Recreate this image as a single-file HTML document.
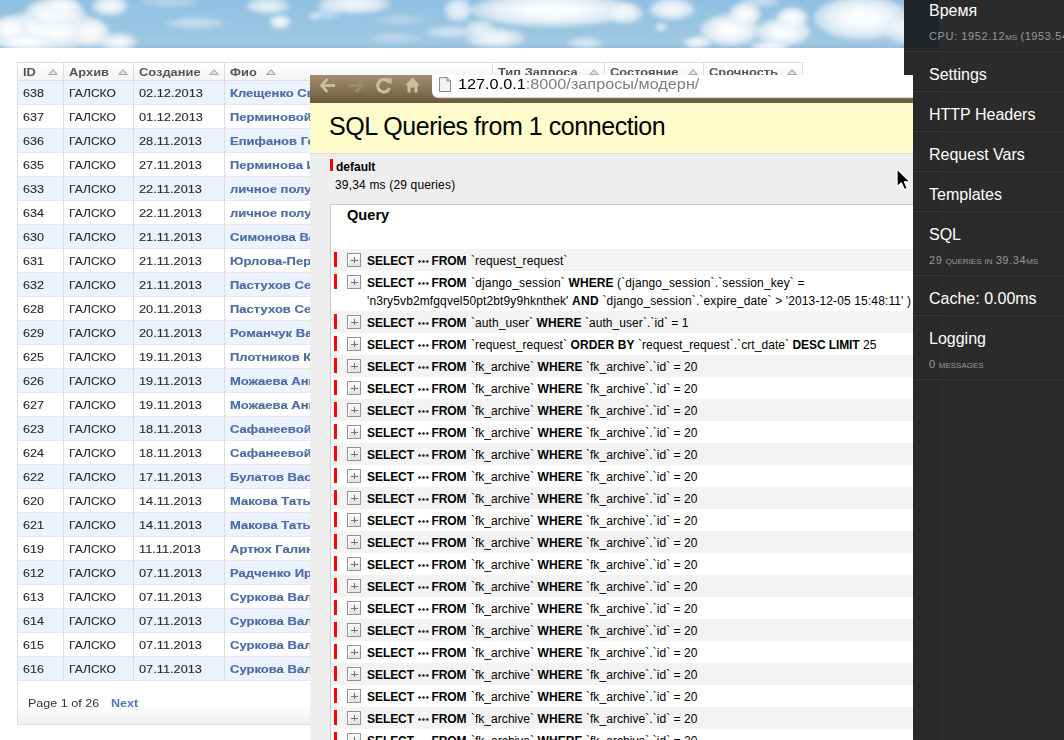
<!DOCTYPE html>
<html><head><meta charset="utf-8">
<style>
*{margin:0;padding:0;box-sizing:border-box}
html,body{width:1064px;height:740px;overflow:hidden;background:#fff;font-family:"Liberation Sans",sans-serif;position:relative}
.abs{position:absolute}
#sky{left:0;top:0;width:939px;height:48px;background:linear-gradient(#8fc0e3,#9fc8e2 90%,#94bedb);overflow:hidden}
#sky .c{position:absolute;border-radius:50%;background:radial-gradient(farthest-side,#fbfcfd 30%,rgba(236,242,246,.85) 75%,rgba(225,234,240,.5));filter:blur(2px)}
#lt{left:17px;top:62px;width:786px;height:620px}
#lt .hd{position:absolute;left:0;top:0;width:786px;height:19px;border-top:1px solid #ddd;border-bottom:1px solid #ddd;background:linear-gradient(#fff,#f3f3f3)}
#lt .rw{position:absolute;left:0;width:786px;height:24px;border-bottom:1px solid #e8e8e8}
#lt .rw.o{background:#edf3fe}
#lt .vl{position:absolute;top:0;width:1px;height:619px;background:#ddd;z-index:2}
.ht{position:absolute;top:66px;font-size:11px;line-height:12px;font-weight:bold;color:#555;white-space:nowrap;transform:scaleX(1.17);transform-origin:0 0}
.tri{position:absolute;top:69px;z-index:3}
.tc{position:absolute;font-size:11px;line-height:24px;height:24px;color:#2a2a2a;-webkit-text-stroke:.1px #2a2a2a;white-space:nowrap;transform:scaleX(1.144);transform-origin:0 0}
.tc.ga{transform:scaleX(1.095)}
.tc.dt{transform:scaleX(1.16)}
.tc.nm{color:#4c70ad;font-weight:bold;transform:scaleX(1.185)}
#pg{left:17px;top:681px;width:786px;height:44px;border:1px solid #ddd;border-top:none;background:linear-gradient(#fff 55%,#eee);font-size:11px;color:#333}
#pg span{position:absolute;left:10px;top:16px;transform:scaleX(1.14);transform-origin:0 0}
#pg b{position:absolute;left:93px;top:16px;color:#4f76b6;transform:scaleX(1.14);transform-origin:0 0}
#ov{z-index:10;left:310px;top:75px;width:603px;height:665px;background:#eee;overflow:hidden}
#bar{left:0;top:0;width:603px;height:28px;background:linear-gradient(#a38f70,#6b5940)}
#url{left:122px;top:0;width:481px;height:22px;background:#fff;border-bottom-left-radius:6px;box-shadow:0 1px 0 #ddd6cc,0 2px 0 #7d6c55;font-size:14px;color:#808080;white-space:nowrap}
#url span{position:absolute;left:26px;top:1px;transform:scaleX(1.16);transform-origin:0 0}
#url b{font-weight:normal;color:#000}
#yel{left:0;top:28px;width:603px;height:51px;background:#fffccc;border-bottom:1px solid #ddd}
#yel h1{position:absolute;left:19px;top:9px;font-size:25px;letter-spacing:-.45px;line-height:28px;font-weight:normal;color:#000;white-space:nowrap}
#def{left:20px;top:84px;width:3px;height:12px;background:#f00}
#deft{left:26px;top:85px;font-size:12px;line-height:14px;font-weight:bold;color:#000}
#ms{left:25px;top:103px;font-size:12px;line-height:14px;color:#000;letter-spacing:.17px}
#qt{left:20px;top:129px;width:620px;height:560px;background:#fff;border:1px solid #ccc}
#qh{left:16px;top:2px;font-size:14.6px;line-height:16px;font-weight:bold;color:#000}
#qrows{left:21px;top:0;width:582px;height:665px}
.r{position:absolute;left:0;width:582px;height:22px;font-size:12px;color:#000;white-space:nowrap}
.r.g{background:#f3f3f3}
.r i{position:absolute;left:3px;top:3px;width:3px;height:15px;background:#f00}
.r u{position:absolute;left:16px;top:4px;width:14px;height:14px;border:1px solid #939393;background:linear-gradient(#fcfcfc,#e2e2e2);box-shadow:inset 1px 1px 0 rgba(255,255,255,.8);text-decoration:none}
.r u:before{content:"";position:absolute;left:3px;top:6px;width:7px;height:1px;background:#6f6f6f}
.r u:after{content:"";position:absolute;left:6px;top:3px;width:1px;height:6px;background:#6f6f6f}
.r p{position:absolute;left:36px;top:3px;line-height:18px}
.r em{display:inline-block;width:11px;height:3px;margin-left:1px;margin-right:-0.5px;background-image:radial-gradient(circle at 1.5px 1.5px,#222 0.9px,rgba(0,0,0,0) 1.6px);background-size:3.9px 3px;background-repeat:repeat-x;vertical-align:2px}
#sb{z-index:20;left:913px;top:0;width:151px;height:740px;background:#2b2b2b}
#sbt{z-index:20;left:904px;top:0;width:9px;height:75px;background:#292929}
#sbd{z-index:21;left:904px;top:0;width:35px;height:48px;background:#202427}
#sbx{z-index:22;left:913px;top:0;width:151px;height:740px}
.si{position:absolute;left:16px;color:#fff;font-size:16px;line-height:16px;white-space:nowrap}
.ss{position:absolute;left:16px;color:#999;font-size:11px;line-height:12px;white-space:nowrap}
.ss small{font-variant:small-caps;font-size:11px}
.sep{position:absolute;left:0;width:151px;height:2px;border-top:1px solid #222;background:#383838}
.ss s{text-decoration:none;letter-spacing:.6px}

#sbs{z-index:20;left:913px;top:48px;width:27px;height:692px;background:#292929}

.r em+span+b{margin-right:1px}

</style></head><body>
<div id="sky" class="abs"><div class="c" style="left:-5px;top:10px;width:110px;height:40px;opacity:1.00"></div><div class="c" style="left:25px;top:-2px;width:60px;height:28px;opacity:1.00"></div><div class="c" style="left:-8px;top:16px;width:36px;height:28px;opacity:1.00"></div><div class="c" style="left:74px;top:19px;width:36px;height:28px;opacity:0.90"></div><div class="c" style="left:44px;top:-2px;width:36px;height:16px;opacity:0.90"></div><div class="c" style="left:-5px;top:34px;width:60px;height:16px;opacity:1.00"></div><div class="c" style="left:92px;top:-4px;width:36px;height:20px;opacity:0.90"></div><div class="c" style="left:99px;top:33px;width:38px;height:18px;opacity:0.90"></div><div class="c" style="left:165px;top:17px;width:60px;height:12px;opacity:0.45"></div><div class="c" style="left:140px;top:-3px;width:60px;height:10px;opacity:0.35"></div><div class="c" style="left:246px;top:-2px;width:44px;height:16px;opacity:0.80"></div><div class="c" style="left:269px;top:15px;width:22px;height:14px;opacity:0.90"></div><div class="c" style="left:308px;top:12px;width:14px;height:8px;opacity:0.60"></div><div class="c" style="left:316px;top:2px;width:24px;height:18px;opacity:0.40"></div><div class="c" style="left:319px;top:-6px;width:72px;height:20px;opacity:0.85"></div><div class="c" style="left:375px;top:15px;width:50px;height:10px;opacity:0.30"></div><div class="c" style="left:370px;top:33px;width:50px;height:10px;opacity:0.35"></div><div class="c" style="left:444px;top:-2px;width:28px;height:24px;opacity:0.80"></div><div class="c" style="left:425px;top:26px;width:50px;height:12px;opacity:0.55"></div><div class="c" style="left:470px;top:-7px;width:164px;height:34px;opacity:1.00"></div><div class="c" style="left:607px;top:2px;width:36px;height:22px;opacity:0.85"></div><div class="c" style="left:465px;top:28px;width:60px;height:20px;opacity:0.85"></div><div class="c" style="left:465px;top:20px;width:30px;height:16px;opacity:0.70"></div><div class="c" style="left:567px;top:37px;width:36px;height:12px;opacity:0.60"></div><div class="c" style="left:649px;top:-2px;width:46px;height:22px;opacity:0.90"></div><div class="c" style="left:655px;top:23px;width:12px;height:8px;opacity:0.80"></div><div class="c" style="left:683px;top:38px;width:20px;height:10px;opacity:0.70"></div><div class="c" style="left:700px;top:14px;width:60px;height:32px;opacity:1.00"></div><div class="c" style="left:729px;top:2px;width:32px;height:24px;opacity:1.00"></div><div class="c" style="left:755px;top:18px;width:56px;height:28px;opacity:1.00"></div><div class="c" style="left:776px;top:7px;width:32px;height:22px;opacity:1.00"></div><div class="c" style="left:750px;top:41px;width:40px;height:10px;opacity:0.90"></div><div class="c" style="left:814px;top:-4px;width:96px;height:44px;opacity:1.00"></div><div class="c" style="left:885px;top:16px;width:40px;height:28px;opacity:0.80"></div><div class="c" style="left:688px;top:36px;width:24px;height:12px;opacity:0.80"></div><div class="c" style="left:740px;top:-3px;width:40px;height:10px;opacity:0.50"></div></div>
<div id="lt" class="abs"><div class="hd"></div><div class="vl" style="left:0px"></div><div class="vl" style="left:46px"></div><div class="vl" style="left:116px"></div><div class="vl" style="left:207px"></div><div class="vl" style="left:475px"></div><div class="vl" style="left:587px"></div><div class="vl" style="left:686px"></div><div class="vl" style="left:785px"></div><div class="rw o" style="top:19px"></div><div class="rw" style="top:43px"></div><div class="rw o" style="top:67px"></div><div class="rw" style="top:91px"></div><div class="rw o" style="top:115px"></div><div class="rw" style="top:139px"></div><div class="rw o" style="top:163px"></div><div class="rw" style="top:187px"></div><div class="rw o" style="top:211px"></div><div class="rw" style="top:235px"></div><div class="rw o" style="top:259px"></div><div class="rw" style="top:283px"></div><div class="rw o" style="top:307px"></div><div class="rw" style="top:331px"></div><div class="rw o" style="top:355px"></div><div class="rw" style="top:379px"></div><div class="rw o" style="top:403px"></div><div class="rw" style="top:427px"></div><div class="rw o" style="top:451px"></div><div class="rw" style="top:475px"></div><div class="rw o" style="top:499px"></div><div class="rw" style="top:523px"></div><div class="rw o" style="top:547px"></div><div class="rw" style="top:571px"></div><div class="rw o" style="top:595px"></div></div><div class="ht" style="left:23px">ID</div><div class="ht" style="left:69px">Архив</div><div class="ht" style="left:139px">Создание</div><div class="ht" style="left:230px">Фио</div><div class="ht" style="left:498px">Тип Запроса</div><div class="ht" style="left:610px">Состояние</div><div class="ht" style="left:709px">Срочность</div><svg class="tri" style="left:48px" width="11" height="7"><path d="M0.7 5.5L5 0.8L9.3 5.5Z" fill="#e6e6e6" stroke="#a8a8a8" stroke-width="1.1" stroke-linejoin="round"/></svg><svg class="tri" style="left:118px" width="11" height="7"><path d="M0.7 5.5L5 0.8L9.3 5.5Z" fill="#e6e6e6" stroke="#a8a8a8" stroke-width="1.1" stroke-linejoin="round"/></svg><svg class="tri" style="left:209px" width="11" height="7"><path d="M0.7 5.5L5 0.8L9.3 5.5Z" fill="#e6e6e6" stroke="#a8a8a8" stroke-width="1.1" stroke-linejoin="round"/></svg><svg class="tri" style="left:266px" width="11" height="7"><path d="M0.7 5.5L5 0.8L9.3 5.5Z" fill="#e6e6e6" stroke="#a8a8a8" stroke-width="1.1" stroke-linejoin="round"/></svg><svg class="tri" style="left:589px" width="11" height="7"><path d="M0.7 5.5L5 0.8L9.3 5.5Z" fill="#e6e6e6" stroke="#a8a8a8" stroke-width="1.1" stroke-linejoin="round"/></svg><svg class="tri" style="left:688px" width="11" height="7"><path d="M0.7 5.5L5 0.8L9.3 5.5Z" fill="#e6e6e6" stroke="#a8a8a8" stroke-width="1.1" stroke-linejoin="round"/></svg><svg class="tri" style="left:787px" width="11" height="7"><path d="M0.7 5.5L5 0.8L9.3 5.5Z" fill="#e6e6e6" stroke="#a8a8a8" stroke-width="1.1" stroke-linejoin="round"/></svg><div class="tc" style="left:23px;top:81px">638</div><div class="tc ga" style="left:69px;top:81px">ГАЛСКО</div><div class="tc dt" style="left:139px;top:81px">02.12.2013</div><div class="tc nm" style="left:230px;top:81px">Клещенко Светлана</div><div class="tc" style="left:23px;top:105px">637</div><div class="tc ga" style="left:69px;top:105px">ГАЛСКО</div><div class="tc dt" style="left:139px;top:105px">01.12.2013</div><div class="tc nm" style="left:230px;top:105px">Перминовой Ирины</div><div class="tc" style="left:23px;top:129px">636</div><div class="tc ga" style="left:69px;top:129px">ГАЛСКО</div><div class="tc dt" style="left:139px;top:129px">28.11.2013</div><div class="tc nm" style="left:230px;top:129px">Епифанов Геннадий</div><div class="tc" style="left:23px;top:153px">635</div><div class="tc ga" style="left:69px;top:153px">ГАЛСКО</div><div class="tc dt" style="left:139px;top:153px">27.11.2013</div><div class="tc nm" style="left:230px;top:153px">Перминова Ирина</div><div class="tc" style="left:23px;top:177px">633</div><div class="tc ga" style="left:69px;top:177px">ГАЛСКО</div><div class="tc dt" style="left:139px;top:177px">22.11.2013</div><div class="tc nm" style="left:230px;top:177px">личное получение</div><div class="tc" style="left:23px;top:201px">634</div><div class="tc ga" style="left:69px;top:201px">ГАЛСКО</div><div class="tc dt" style="left:139px;top:201px">22.11.2013</div><div class="tc nm" style="left:230px;top:201px">личное получение</div><div class="tc" style="left:23px;top:225px">630</div><div class="tc ga" style="left:69px;top:225px">ГАЛСКО</div><div class="tc dt" style="left:139px;top:225px">21.11.2013</div><div class="tc nm" style="left:230px;top:225px">Симонова Валентина</div><div class="tc" style="left:23px;top:249px">631</div><div class="tc ga" style="left:69px;top:249px">ГАЛСКО</div><div class="tc dt" style="left:139px;top:249px">21.11.2013</div><div class="tc nm" style="left:230px;top:249px">Юрлова-Перминова</div><div class="tc" style="left:23px;top:273px">632</div><div class="tc ga" style="left:69px;top:273px">ГАЛСКО</div><div class="tc dt" style="left:139px;top:273px">21.11.2013</div><div class="tc nm" style="left:230px;top:273px">Пастухов Сергей</div><div class="tc" style="left:23px;top:297px">628</div><div class="tc ga" style="left:69px;top:297px">ГАЛСКО</div><div class="tc dt" style="left:139px;top:297px">20.11.2013</div><div class="tc nm" style="left:230px;top:297px">Пастухов Сергей</div><div class="tc" style="left:23px;top:321px">629</div><div class="tc ga" style="left:69px;top:321px">ГАЛСКО</div><div class="tc dt" style="left:139px;top:321px">20.11.2013</div><div class="tc nm" style="left:230px;top:321px">Романчук Валентина</div><div class="tc" style="left:23px;top:345px">625</div><div class="tc ga" style="left:69px;top:345px">ГАЛСКО</div><div class="tc dt" style="left:139px;top:345px">19.11.2013</div><div class="tc nm" style="left:230px;top:345px">Плотников Константин</div><div class="tc" style="left:23px;top:369px">626</div><div class="tc ga" style="left:69px;top:369px">ГАЛСКО</div><div class="tc dt" style="left:139px;top:369px">19.11.2013</div><div class="tc nm" style="left:230px;top:369px">Можаева Анна</div><div class="tc" style="left:23px;top:393px">627</div><div class="tc ga" style="left:69px;top:393px">ГАЛСКО</div><div class="tc dt" style="left:139px;top:393px">19.11.2013</div><div class="tc nm" style="left:230px;top:393px">Можаева Анна</div><div class="tc" style="left:23px;top:417px">623</div><div class="tc ga" style="left:69px;top:417px">ГАЛСКО</div><div class="tc dt" style="left:139px;top:417px">18.11.2013</div><div class="tc nm" style="left:230px;top:417px">Сафанеевой Ольги</div><div class="tc" style="left:23px;top:441px">624</div><div class="tc ga" style="left:69px;top:441px">ГАЛСКО</div><div class="tc dt" style="left:139px;top:441px">18.11.2013</div><div class="tc nm" style="left:230px;top:441px">Сафанеевой Ольги</div><div class="tc" style="left:23px;top:465px">622</div><div class="tc ga" style="left:69px;top:465px">ГАЛСКО</div><div class="tc dt" style="left:139px;top:465px">17.11.2013</div><div class="tc nm" style="left:230px;top:465px">Булатов Василий</div><div class="tc" style="left:23px;top:489px">620</div><div class="tc ga" style="left:69px;top:489px">ГАЛСКО</div><div class="tc dt" style="left:139px;top:489px">14.11.2013</div><div class="tc nm" style="left:230px;top:489px">Макова Татьяна</div><div class="tc" style="left:23px;top:513px">621</div><div class="tc ga" style="left:69px;top:513px">ГАЛСКО</div><div class="tc dt" style="left:139px;top:513px">14.11.2013</div><div class="tc nm" style="left:230px;top:513px">Макова Татьяна</div><div class="tc" style="left:23px;top:537px">619</div><div class="tc ga" style="left:69px;top:537px">ГАЛСКО</div><div class="tc dt" style="left:139px;top:537px">11.11.2013</div><div class="tc nm" style="left:230px;top:537px">Артюх Галина</div><div class="tc" style="left:23px;top:561px">612</div><div class="tc ga" style="left:69px;top:561px">ГАЛСКО</div><div class="tc dt" style="left:139px;top:561px">07.11.2013</div><div class="tc nm" style="left:230px;top:561px">Радченко Ирина</div><div class="tc" style="left:23px;top:585px">613</div><div class="tc ga" style="left:69px;top:585px">ГАЛСКО</div><div class="tc dt" style="left:139px;top:585px">07.11.2013</div><div class="tc nm" style="left:230px;top:585px">Суркова Валентина</div><div class="tc" style="left:23px;top:609px">614</div><div class="tc ga" style="left:69px;top:609px">ГАЛСКО</div><div class="tc dt" style="left:139px;top:609px">07.11.2013</div><div class="tc nm" style="left:230px;top:609px">Суркова Валентина</div><div class="tc" style="left:23px;top:633px">615</div><div class="tc ga" style="left:69px;top:633px">ГАЛСКО</div><div class="tc dt" style="left:139px;top:633px">07.11.2013</div><div class="tc nm" style="left:230px;top:633px">Суркова Валентина</div><div class="tc" style="left:23px;top:657px">616</div><div class="tc ga" style="left:69px;top:657px">ГАЛСКО</div><div class="tc dt" style="left:139px;top:657px">07.11.2013</div><div class="tc nm" style="left:230px;top:657px">Суркова Валентина</div><div id="pg" class="abs"><span>Page 1 of 26</span><b>Next</b></div>
<div id="ov" class="abs">
  <div id="bar" class="abs"></div>
  <svg class="abs" style="left:0;top:0" width="122" height="28" viewBox="310 75 122 28">
    <g fill="none" stroke="#c9c19e" stroke-width="2.8" stroke-linecap="butt" stroke-linejoin="round">
      <path d="M327.5 79L321.5 85.5L327.5 92"/>
      <path d="M321.5 85.5H335"/>
    </g>
    <g fill="none" stroke="#9a8b6c" stroke-width="3">
      <path d="M356 79L362 85.5L356 92"/>
      <path d="M348.5 85.5H360.5"/>
    </g>
    <path d="M389.2 82.5A6.2 6.2 0 1 0 389.6 88.2" fill="none" stroke="#c9c19e" stroke-width="3"/>
    <path d="M385.5 78.5L391.5 78.5L391.5 84.5Z" fill="#c9c19e"/>
    <path d="M405 85.5L412.5 77.5L420 85.5L417.5 85.5L417.5 92.5L414.5 92.5L414.5 87.5L410.5 87.5L410.5 92.5L407.5 92.5L407.5 85.5Z" fill="#c9c19e"/>
    
  </svg>
  <div id="url" class="abs"><svg class="abs" style="left:7px;top:2px" width="13" height="15"><path d="M0.5 0.5H8L11.5 4V14.5H0.5Z" fill="#f2f2f2" stroke="#8a8a8a"/><path d="M8 0.5V4H11.5" fill="none" stroke="#8a8a8a"/></svg><span><b>127.0.0.1</b>:8000/запросы/модерн/</span></div>
  <div id="yel" class="abs"><h1>SQL Queries from 1 connection</h1></div>
  <div id="def" class="abs"></div>
  <div id="deft" class="abs">default</div>
  <div id="ms" class="abs">39,34 ms (29 queries)</div>
  <div id="qt" class="abs"><div id="qh" class="abs">Query</div></div>
<div id="qrows" class="abs"><div class="r g" style="top:174px;height:22px"><i></i><u></u><p><b style="letter-spacing:-0.056px">SELECT</b><span style="letter-spacing:-0.334px"> </span><em></em><span style="letter-spacing:-0.334px"> </span><b style="letter-spacing:-0.082px">FROM</b><span style="letter-spacing:0.108px"> `request_request`</span></p></div><div class="r " style="top:196px;height:40px"><i></i><u></u><p><b style="letter-spacing:-0.056px">SELECT</b><span style="letter-spacing:-0.334px"> </span><em></em><span style="letter-spacing:-0.334px"> </span><b style="letter-spacing:-0.082px">FROM</b><span style="letter-spacing:0.164px"> `django_session` </span><b style="letter-spacing:0.067px">WHERE</b><span style="letter-spacing:0.135px"> (`django_session`.`session_key` =</span><br><span style="letter-spacing:0.122px">'n3ry5vb2mfgqvel50pt2bt9y9hknthek' </span><b style="letter-spacing:0.334px">AND</b><span style="letter-spacing:0.127px"> `django_session`.`expire_date` &gt; '2013-12-05 15:48:11' )</span></p></div><div class="r g" style="top:236px;height:22px"><i></i><u></u><p><b style="letter-spacing:-0.056px">SELECT</b><span style="letter-spacing:-0.334px"> </span><em></em><span style="letter-spacing:-0.334px"> </span><b style="letter-spacing:-0.082px">FROM</b><span style="letter-spacing:0.074px"> `auth_user` </span><b style="letter-spacing:0.067px">WHERE</b><span style="letter-spacing:0.061px"> `auth_user`.`id` = 1</span></p></div><div class="r " style="top:258px;height:22px"><i></i><u></u><p><b style="letter-spacing:-0.056px">SELECT</b><span style="letter-spacing:-0.334px"> </span><em></em><span style="letter-spacing:-0.334px"> </span><b style="letter-spacing:-0.082px">FROM</b><span style="letter-spacing:0.085px"> `request_request` </span><b style="letter-spacing:0.083px">ORDER BY</b><span style="letter-spacing:0.064px"> `request_request`.`crt_date` </span><b style="letter-spacing:-0.100px">DESC LIMIT</b><span style="letter-spacing:0.106px"> 25</span></p></div><div class="r g" style="top:280px;height:22px"><i></i><u></u><p><b style="letter-spacing:-0.056px">SELECT</b><span style="letter-spacing:-0.334px"> </span><em></em><span style="letter-spacing:-0.334px"> </span><b style="letter-spacing:-0.082px">FROM</b><span style="letter-spacing:0.046px"> `fk_archive` </span><b style="letter-spacing:0.067px">WHERE</b><span style="letter-spacing:0.056px"> `fk_archive`.`id` = 20</span></p></div><div class="r " style="top:302px;height:22px"><i></i><u></u><p><b style="letter-spacing:-0.056px">SELECT</b><span style="letter-spacing:-0.334px"> </span><em></em><span style="letter-spacing:-0.334px"> </span><b style="letter-spacing:-0.082px">FROM</b><span style="letter-spacing:0.046px"> `fk_archive` </span><b style="letter-spacing:0.067px">WHERE</b><span style="letter-spacing:0.056px"> `fk_archive`.`id` = 20</span></p></div><div class="r g" style="top:324px;height:22px"><i></i><u></u><p><b style="letter-spacing:-0.056px">SELECT</b><span style="letter-spacing:-0.334px"> </span><em></em><span style="letter-spacing:-0.334px"> </span><b style="letter-spacing:-0.082px">FROM</b><span style="letter-spacing:0.046px"> `fk_archive` </span><b style="letter-spacing:0.067px">WHERE</b><span style="letter-spacing:0.056px"> `fk_archive`.`id` = 20</span></p></div><div class="r " style="top:346px;height:22px"><i></i><u></u><p><b style="letter-spacing:-0.056px">SELECT</b><span style="letter-spacing:-0.334px"> </span><em></em><span style="letter-spacing:-0.334px"> </span><b style="letter-spacing:-0.082px">FROM</b><span style="letter-spacing:0.046px"> `fk_archive` </span><b style="letter-spacing:0.067px">WHERE</b><span style="letter-spacing:0.056px"> `fk_archive`.`id` = 20</span></p></div><div class="r g" style="top:368px;height:22px"><i></i><u></u><p><b style="letter-spacing:-0.056px">SELECT</b><span style="letter-spacing:-0.334px"> </span><em></em><span style="letter-spacing:-0.334px"> </span><b style="letter-spacing:-0.082px">FROM</b><span style="letter-spacing:0.046px"> `fk_archive` </span><b style="letter-spacing:0.067px">WHERE</b><span style="letter-spacing:0.056px"> `fk_archive`.`id` = 20</span></p></div><div class="r " style="top:390px;height:22px"><i></i><u></u><p><b style="letter-spacing:-0.056px">SELECT</b><span style="letter-spacing:-0.334px"> </span><em></em><span style="letter-spacing:-0.334px"> </span><b style="letter-spacing:-0.082px">FROM</b><span style="letter-spacing:0.046px"> `fk_archive` </span><b style="letter-spacing:0.067px">WHERE</b><span style="letter-spacing:0.056px"> `fk_archive`.`id` = 20</span></p></div><div class="r g" style="top:412px;height:22px"><i></i><u></u><p><b style="letter-spacing:-0.056px">SELECT</b><span style="letter-spacing:-0.334px"> </span><em></em><span style="letter-spacing:-0.334px"> </span><b style="letter-spacing:-0.082px">FROM</b><span style="letter-spacing:0.046px"> `fk_archive` </span><b style="letter-spacing:0.067px">WHERE</b><span style="letter-spacing:0.056px"> `fk_archive`.`id` = 20</span></p></div><div class="r " style="top:434px;height:22px"><i></i><u></u><p><b style="letter-spacing:-0.056px">SELECT</b><span style="letter-spacing:-0.334px"> </span><em></em><span style="letter-spacing:-0.334px"> </span><b style="letter-spacing:-0.082px">FROM</b><span style="letter-spacing:0.046px"> `fk_archive` </span><b style="letter-spacing:0.067px">WHERE</b><span style="letter-spacing:0.056px"> `fk_archive`.`id` = 20</span></p></div><div class="r g" style="top:456px;height:22px"><i></i><u></u><p><b style="letter-spacing:-0.056px">SELECT</b><span style="letter-spacing:-0.334px"> </span><em></em><span style="letter-spacing:-0.334px"> </span><b style="letter-spacing:-0.082px">FROM</b><span style="letter-spacing:0.046px"> `fk_archive` </span><b style="letter-spacing:0.067px">WHERE</b><span style="letter-spacing:0.056px"> `fk_archive`.`id` = 20</span></p></div><div class="r " style="top:478px;height:22px"><i></i><u></u><p><b style="letter-spacing:-0.056px">SELECT</b><span style="letter-spacing:-0.334px"> </span><em></em><span style="letter-spacing:-0.334px"> </span><b style="letter-spacing:-0.082px">FROM</b><span style="letter-spacing:0.046px"> `fk_archive` </span><b style="letter-spacing:0.067px">WHERE</b><span style="letter-spacing:0.056px"> `fk_archive`.`id` = 20</span></p></div><div class="r g" style="top:500px;height:22px"><i></i><u></u><p><b style="letter-spacing:-0.056px">SELECT</b><span style="letter-spacing:-0.334px"> </span><em></em><span style="letter-spacing:-0.334px"> </span><b style="letter-spacing:-0.082px">FROM</b><span style="letter-spacing:0.046px"> `fk_archive` </span><b style="letter-spacing:0.067px">WHERE</b><span style="letter-spacing:0.056px"> `fk_archive`.`id` = 20</span></p></div><div class="r " style="top:522px;height:22px"><i></i><u></u><p><b style="letter-spacing:-0.056px">SELECT</b><span style="letter-spacing:-0.334px"> </span><em></em><span style="letter-spacing:-0.334px"> </span><b style="letter-spacing:-0.082px">FROM</b><span style="letter-spacing:0.046px"> `fk_archive` </span><b style="letter-spacing:0.067px">WHERE</b><span style="letter-spacing:0.056px"> `fk_archive`.`id` = 20</span></p></div><div class="r g" style="top:544px;height:22px"><i></i><u></u><p><b style="letter-spacing:-0.056px">SELECT</b><span style="letter-spacing:-0.334px"> </span><em></em><span style="letter-spacing:-0.334px"> </span><b style="letter-spacing:-0.082px">FROM</b><span style="letter-spacing:0.046px"> `fk_archive` </span><b style="letter-spacing:0.067px">WHERE</b><span style="letter-spacing:0.056px"> `fk_archive`.`id` = 20</span></p></div><div class="r " style="top:566px;height:22px"><i></i><u></u><p><b style="letter-spacing:-0.056px">SELECT</b><span style="letter-spacing:-0.334px"> </span><em></em><span style="letter-spacing:-0.334px"> </span><b style="letter-spacing:-0.082px">FROM</b><span style="letter-spacing:0.046px"> `fk_archive` </span><b style="letter-spacing:0.067px">WHERE</b><span style="letter-spacing:0.056px"> `fk_archive`.`id` = 20</span></p></div><div class="r g" style="top:588px;height:22px"><i></i><u></u><p><b style="letter-spacing:-0.056px">SELECT</b><span style="letter-spacing:-0.334px"> </span><em></em><span style="letter-spacing:-0.334px"> </span><b style="letter-spacing:-0.082px">FROM</b><span style="letter-spacing:0.046px"> `fk_archive` </span><b style="letter-spacing:0.067px">WHERE</b><span style="letter-spacing:0.056px"> `fk_archive`.`id` = 20</span></p></div><div class="r " style="top:610px;height:22px"><i></i><u></u><p><b style="letter-spacing:-0.056px">SELECT</b><span style="letter-spacing:-0.334px"> </span><em></em><span style="letter-spacing:-0.334px"> </span><b style="letter-spacing:-0.082px">FROM</b><span style="letter-spacing:0.046px"> `fk_archive` </span><b style="letter-spacing:0.067px">WHERE</b><span style="letter-spacing:0.056px"> `fk_archive`.`id` = 20</span></p></div><div class="r g" style="top:632px;height:22px"><i></i><u></u><p><b style="letter-spacing:-0.056px">SELECT</b><span style="letter-spacing:-0.334px"> </span><em></em><span style="letter-spacing:-0.334px"> </span><b style="letter-spacing:-0.082px">FROM</b><span style="letter-spacing:0.046px"> `fk_archive` </span><b style="letter-spacing:0.067px">WHERE</b><span style="letter-spacing:0.056px"> `fk_archive`.`id` = 20</span></p></div><div class="r " style="top:654px;height:22px"><i></i><u></u><p><b style="letter-spacing:-0.056px">SELECT</b><span style="letter-spacing:-0.334px"> </span><em></em><span style="letter-spacing:-0.334px"> </span><b style="letter-spacing:-0.082px">FROM</b><span style="letter-spacing:0.046px"> `fk_archive` </span><b style="letter-spacing:0.067px">WHERE</b><span style="letter-spacing:0.056px"> `fk_archive`.`id` = 20</span></p></div><div class="r g" style="top:676px;height:22px"><i></i><u></u><p><b style="letter-spacing:-0.056px">SELECT</b><span style="letter-spacing:-0.334px"> </span><em></em><span style="letter-spacing:-0.334px"> </span><b style="letter-spacing:-0.082px">FROM</b><span style="letter-spacing:0.046px"> `fk_archive` </span><b style="letter-spacing:0.067px">WHERE</b><span style="letter-spacing:0.056px"> `fk_archive`.`id` = 20</span></p></div><div class="r " style="top:698px;height:22px"><i></i><u></u><p><b style="letter-spacing:-0.056px">SELECT</b><span style="letter-spacing:-0.334px"> </span><em></em><span style="letter-spacing:-0.334px"> </span><b style="letter-spacing:-0.082px">FROM</b><span style="letter-spacing:0.046px"> `fk_archive` </span><b style="letter-spacing:0.067px">WHERE</b><span style="letter-spacing:0.056px"> `fk_archive`.`id` = 20</span></p></div></div></div>
<div id="sbt" class="abs"><div class="sep" style="top:50px;width:9px"></div></div>
<div id="sb" class="abs"></div><div id="sbs" class="abs"></div><div id="sbd" class="abs"></div><div id="sbx" class="abs">
  <div class="si" style="top:3px">Время</div>
  <div class="ss" style="top:30px"><s>CPU: 1952.12</s><small>ms</small> <s>(1953.54</s><small>ms</small><s>)</s></div>
  <div class="sep" style="top:50px"></div>
  <div class="si" style="top:67px">Settings</div>
  <div class="sep" style="top:90px"></div>
  <div class="si" style="top:107px">HTTP Headers</div>
  <div class="sep" style="top:130px"></div>
  <div class="si" style="top:147px">Request Vars</div>
  <div class="sep" style="top:170px"></div>
  <div class="si" style="top:187px">Templates</div>
  <div class="sep" style="top:210px"></div>
  <div class="si" style="top:227px">SQL</div>
  <div class="ss" style="top:254px"><s>29</s> <small>queries in</small> <s>39.34</s><small>ms</small></div>
  <div class="sep" style="top:274px"></div>
  <div class="si" style="top:291px">Cache: 0.00ms</div>
  <div class="sep" style="top:314px"></div>
  <div class="si" style="top:331px">Logging</div>
  <div class="ss" style="top:358px"><s>0</s> <small>messages</small></div>
  <div class="sep" style="top:378px"></div>
</div>
<svg id="cur" class="abs" style="left:895px;top:167px;z-index:30" width="18" height="24" viewBox="-1.5 -1.5 18 24"><path d="M0.5 0.5L0.5 18.3L4.8 14.4L8 21.2L10.9 19.9L7.9 13.3L13.6 13.3Z" fill="#000" stroke="#fff" stroke-width="1.3" stroke-linejoin="round"/></svg>
</body></html>
